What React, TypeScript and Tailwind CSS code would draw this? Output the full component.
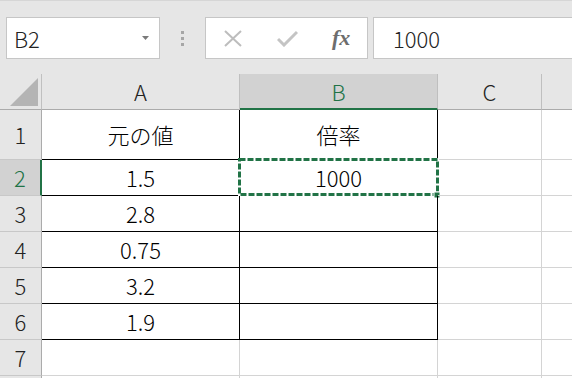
import React from "react";

const FONT = { fontFamily: '"Noto Sans CJK JP", "Noto Sans", sans-serif' };

type CellSpec = { text?: string; right?: string; bottom?: string };

const GRID = "#d4d4d4";
const BLACK = "#000000";

function Cell({ w, text, right, bottom, children }: { w: string; text?: string; right: string; bottom: string; children?: React.ReactNode }) {
  return (
    <div
      className={`relative ${w} shrink-0 h-full flex items-center justify-center border-r border-b text-[22px] font-light text-black`}
      style={{ borderRightColor: right, borderBottomColor: bottom }}
    >
      {text}
      {children}
    </div>
  );
}

function Selection() {
  return (
    <div className="absolute left-[-2px] top-[-2px] w-[201px] h-[38px] pointer-events-none">
      <svg width="201" height="38" className="absolute left-0 top-0 overflow-visible">
        <rect x="1.5" y="1.5" width="198" height="35" fill="none" stroke="#ffffff" strokeWidth="3" />
        <rect x="1.5" y="1.5" width="198" height="35" fill="none" stroke="#217346" strokeWidth="3" strokeDasharray="6 2" />
        <rect x="196" y="34" width="6" height="6" fill="#217346" stroke="#ffffff" strokeWidth="1" />
      </svg>
    </div>
  );
}

export default function App() {
  const rows: { n: number | null; h: string; a: CellSpec; b: CellSpec; sel?: boolean }[] = [
    { n: 1, h: "h-[50px]", a: { text: "元の値", right: BLACK, bottom: BLACK }, b: { text: "倍率", right: BLACK, bottom: BLACK } },
    { n: 2, h: "h-[36px]", a: { text: "1.5", right: BLACK, bottom: BLACK }, b: { text: "1000", right: BLACK, bottom: BLACK }, sel: true },
    { n: 3, h: "h-[36px]", a: { text: "2.8", right: BLACK, bottom: BLACK }, b: { right: BLACK, bottom: BLACK } },
    { n: 4, h: "h-[36px]", a: { text: "0.75", right: BLACK, bottom: BLACK }, b: { right: BLACK, bottom: BLACK } },
    { n: 5, h: "h-[36px]", a: { text: "3.2", right: BLACK, bottom: BLACK }, b: { right: BLACK, bottom: BLACK } },
    { n: 6, h: "h-[36px]", a: { text: "1.9", right: BLACK, bottom: BLACK }, b: { right: BLACK, bottom: BLACK } },
    { n: 7, h: "h-[36px]", a: { right: GRID, bottom: GRID }, b: { right: GRID, bottom: GRID } },
    { n: null, h: "h-[36px]", a: { right: GRID, bottom: GRID }, b: { right: GRID, bottom: GRID } },
  ];

  return (
    <div className="w-[572px] h-[378px] overflow-hidden bg-white" style={FONT}>
      {/* Formula bar area */}
      <div className="h-[74px] bg-[#e6e6e6] border-t border-[#d6d6d6] flex items-start pt-[16px] overflow-hidden">
        <div className="shrink-0 ml-[6px] w-[154px] h-[42px] bg-white border border-[#c6c6c6] flex items-center pl-[7px] pr-[10px] justify-between">
          <span className="text-[22px] font-light text-[#222] leading-none">B2</span>
          <svg width="7" height="4" viewBox="0 0 7 4"><path d="M0 0 L7 0 L3.5 4 Z" fill="#7a7a7a" /></svg>
        </div>
        <div className="shrink-0 w-[45px] h-[42px] flex flex-col items-center justify-center gap-[3px]">
          <div className="w-[3px] h-[3px] bg-[#a6a6a6]" />
          <div className="w-[3px] h-[3px] bg-[#a6a6a6]" />
          <div className="w-[3px] h-[3px] bg-[#a6a6a6]" />
        </div>
        <div className="shrink-0 w-[163px] h-[42px] bg-white border border-[#c6c6c6] flex items-center">
          <svg width="18" height="17" viewBox="0 0 18 17" className="ml-[18px]">
            <path d="M1 1 L17 16 M17 1 L1 16" stroke="#bdbdbd" strokeWidth="2" fill="none" />
          </svg>
          <svg width="21" height="17" viewBox="0 0 21 17" className="ml-[35px]">
            <path d="M1 9 L7 15 L20 2" stroke="#c4c4c4" strokeWidth="3" fill="none" />
          </svg>
          <span
            className="ml-[34px] text-[22px] italic font-bold text-[#6d6d6d] leading-none"
            style={{ fontFamily: '"Liberation Serif", "DejaVu Serif", serif' }}
          >
            fx
          </span>
        </div>
        <div className="shrink-0 ml-[5px] w-[260px] h-[42px] bg-white border border-[#c6c6c6] flex items-center pl-[19px]">
          <span className="text-[22px] font-light text-[#222] leading-none">1000</span>
        </div>
      </div>

      {/* Column header row */}
      <div className="flex h-[36px]">
        <div className="shrink-0 relative w-[42px] h-full border-r border-b border-r-[#c0c0c0] border-b-[#ababab] bg-[#e6e6e6]">
          <svg width="30" height="30" className="absolute left-[9px] top-[3px]">
            <path d="M1 29 L29 29 L29 1 Z" fill="#b4b4b4" />
          </svg>
        </div>
        <div className="shrink-0 w-[198px] h-full border-r border-b border-r-[#bfbfbf] border-b-[#ababab] bg-[#e6e6e6] flex items-center justify-center text-[22px] font-light text-[#222]">A</div>
        <div className="shrink-0 w-[198px] h-full border-r border-b-2 border-r-[#bfbfbf] border-b-[#217346] bg-[#d2d2d2] flex items-center justify-center text-[22px] font-light text-[#217346]">B</div>
        <div className="shrink-0 w-[104px] h-full border-r border-b border-r-[#bfbfbf] border-b-[#ababab] bg-[#e6e6e6] flex items-center justify-center text-[22px] font-light text-[#222]">C</div>
        <div className="flex-1 h-full border-b border-b-[#ababab] bg-[#e6e6e6]" />
      </div>

      {rows.map((r, i) => (
        <div key={i} className={`flex ${r.h}`}>
          <div
            className={`shrink-0 w-[42px] h-full border-r border-b flex items-center justify-center text-[22px] font-light ${
              r.sel ? "bg-[#d2d2d2] text-[#217346] border-r-2 border-r-[#217346]" : "bg-[#e6e6e6] text-[#222] border-r-[#ababab]"
            } border-b-[#c8c8c8]`}
          >
            {r.n}
          </div>
          <Cell w="w-[198px]" text={r.a.text} right={r.a.right!} bottom={r.a.bottom!} />
          <Cell w="w-[198px]" text={r.b.text} right={r.b.right!} bottom={r.b.bottom!}>
            {r.sel ? <Selection /> : null}
          </Cell>
          <Cell w="w-[104px]" right={GRID} bottom={GRID} />
          <div className="flex-1 h-full border-b" style={{ borderBottomColor: GRID }} />
        </div>
      ))}
    </div>
  );
}
